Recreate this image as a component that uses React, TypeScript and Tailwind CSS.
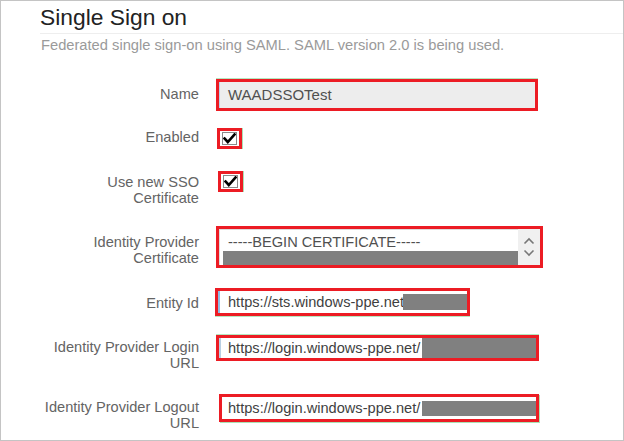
import React from "react";

const Check = () => (
  <svg width="13" height="11" viewBox="0 0 13 11" className="block">
    <path d="M1.5 5.5 L4.8 9 L11.5 1.5" fill="none" stroke="#000" strokeWidth="2.6" strokeLinecap="square" />
  </svg>
);

const CheckBoxRed = ({ ml }: { ml: string }) => (
  <div className={`${ml} w-[25px] h-[21px] border-[3px] border-[#ec1c24] bg-white flex items-center justify-center shadow-[1px_0_0_#a9e2b5]`}>
    <div className="w-[15px] h-[13px] border border-[#8a8a8a] bg-white flex items-center justify-center">
      <Check />
    </div>
  </div>
);

export default function App() {
  return (
    <div className="w-[624px] h-[441px] border border-[#c4c4c4] bg-white overflow-hidden font-['Liberation_Sans',Arial,sans-serif]">
      <div className="ml-[39px] mt-[3px] pb-[3px] border-b border-[#eeeeee]">
        <div className="text-[22.8px] leading-[26px] text-[#222]">Single Sign on</div>
      </div>
      <div className="ml-[40px] mt-[2px] text-[14.7px] leading-[18px] text-[#9a9a9a]">
        Federated single sign-on using SAML. SAML version 2.0 is being used.
      </div>

      <div className="text-[14.6px] leading-[16px] text-[#646464]">
        {/* Name */}
        <div className="mt-[25px] h-[32px] flex items-start">
          <div className="w-[198px] text-right pt-[7px]">Name</div>
          <div className="ml-[17px] w-[322px] h-[32px] border-[3px] border-[#ec1c24] bg-[#ededed] flex items-center shadow-[0_-1px_0_#b5e7c0]">
            <div className="w-[1px] h-full bg-[#b7d3ec]" />
            <span className="ml-[8px] text-[#505050] text-[15px]">WAADSSOTest</span>
          </div>
        </div>

        {/* Enabled */}
        <div className="mt-[17px] h-[21px] flex items-start">
          <div className="w-[198px] text-right pt-[1px]">Enabled</div>
          <CheckBoxRed ml="ml-[18px]" />
        </div>

        {/* Use new SSO */}
        <div className="mt-[22px] h-[20px] flex items-start">
          <div className="w-[198px] text-right pt-[3px]">
            Use new SSO
            <br />
            Certificate
          </div>
          <CheckBoxRed ml="ml-[19px]" />
        </div>

        {/* Identity Provider Certificate */}
        <div className="mt-[35px] h-[42px] flex items-start">
          <div className="w-[198px] text-right pt-[8px]">
            Identity Provider
            <br />
            Certificate
          </div>
          <div className="ml-[17px] w-[327px] h-[42px] border-[3px] border-[#ec1c24] bg-white flex">
            <div className="flex-1 flex flex-col border-t border-l border-[#dcdcdc] overflow-hidden">
              <div className="pl-[8px] pt-[3px] h-[22px] text-[#505050] leading-[18px]">-----BEGIN CERTIFICATE-----</div>
              <div className="ml-[3px] h-[14px] bg-[#808080]" />
            </div>
            <div className="w-[22px] bg-[#f0f0f0] flex flex-col items-center justify-center gap-[4px]">
              <svg width="12" height="8" viewBox="0 0 12 8">
                <path d="M1.5 6.5 L6 2 L10.5 6.5" fill="none" stroke="#777" strokeWidth="1.6" />
              </svg>
              <svg width="12" height="8" viewBox="0 0 12 8">
                <path d="M1.5 1.5 L6 6 L10.5 1.5" fill="none" stroke="#777" strokeWidth="1.6" />
              </svg>
            </div>
          </div>
        </div>

        {/* Entity Id */}
        <div className="mt-[20px] h-[28px] flex items-start">
          <div className="w-[198px] text-right pt-[7px]">Entity Id</div>
          <div className="ml-[16px] w-[255px] h-[28px] border-[3px] border-[#ec1c24] bg-white flex items-center overflow-hidden shadow-[0_1px_0_#b5e7c0]">
            <div className="w-[2px] h-full bg-[#8fbde6]" />
            <span className="ml-[8px] text-[#3f3f3f] whitespace-nowrap">https://sts.windows-ppe.net</span>
            <span className="ml-[-1px] w-[64px] h-[16px] shrink-0 bg-[#808080]" />
          </div>
        </div>

        {/* Login URL */}
        <div className="mt-[19px] h-[26px] flex items-start">
          <div className="w-[198px] text-right pt-[4px]">
            Identity Provider Login
            <br />
            URL
          </div>
          <div className="ml-[17px] w-[323px] h-[26px] border-[3px] border-[#ec1c24] bg-white flex items-center overflow-hidden shadow-[0_-1px_0_#b5e7c0]">
            <div className="w-[2px] h-full bg-[#b8cfe3]" />
            <span className="ml-[7px] text-[#3f3f3f] whitespace-nowrap">https://login.windows-ppe.net/</span>
            <span className="ml-[2px] flex-1 h-[20px] bg-[#808080]" />
          </div>
        </div>

        {/* Logout URL */}
        <div className="mt-[33px] h-[28px] flex items-start">
          <div className="w-[198px] text-right pt-[5px]">
            Identity Provider Logout
            <br />
            URL
          </div>
          <div className="ml-[20px] w-[320px] h-[28px] border-[3px] border-[#ec1c24] bg-white flex items-center overflow-hidden shadow-[1px_1px_0_#a9e2b5]">
            <span className="ml-[6px] text-[#3f3f3f] whitespace-nowrap">https://login.windows-ppe.net/</span>
            <span className="ml-[2px] flex-1 h-[15px] bg-[#808080]" />
          </div>
        </div>
      </div>
    </div>
  );
}
